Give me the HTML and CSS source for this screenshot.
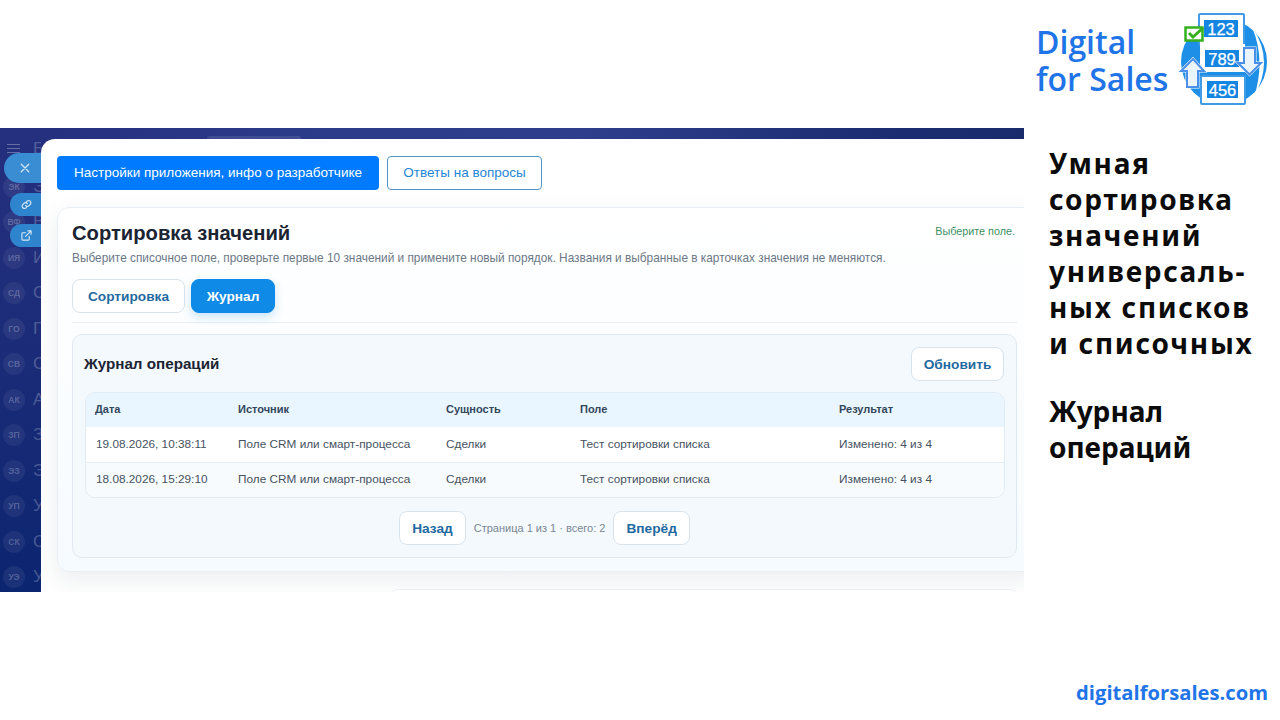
FILE: index.html
```html
<!DOCTYPE html>
<html lang="ru">
<head>
<meta charset="utf-8">
<title>Digital for Sales</title>
<link rel="stylesheet" href="styles.css">
</head>
<body>
<div class="slide">
  <div class="left">
    <div class="shot">
      <aside class="sidebar">
        <div class="side-head">
          <span class="burger"><i></i><i></i><i></i></span>
          <span class="side-label">Б</span>
        </div>
        <div class="side-item"><span class="ava">ЭК</span><span class="side-label">Э</span></div>
        <div class="side-item"><span class="ava">ВФ</span><span class="side-label">В</span></div>
        <div class="side-item"><span class="ava">ИЯ</span><span class="side-label">И</span></div>
        <div class="side-item"><span class="ava">СД</span><span class="side-label">С</span></div>
        <div class="side-item"><span class="ava">ГО</span><span class="side-label">Г</span></div>
        <div class="side-item"><span class="ava">СВ</span><span class="side-label">С</span></div>
        <div class="side-item"><span class="ava">АК</span><span class="side-label">А</span></div>
        <div class="side-item"><span class="ava">ЗП</span><span class="side-label">З</span></div>
        <div class="side-item"><span class="ava">ЭЗ</span><span class="side-label">Э</span></div>
        <div class="side-item"><span class="ava">УП</span><span class="side-label">У</span></div>
        <div class="side-item"><span class="ava">СК</span><span class="side-label">С</span></div>
        <div class="side-item"><span class="ava">УЭ</span><span class="side-label">У</span></div>
      </aside>
      <div class="main">
        <div class="topbar"><span class="top-pill"></span></div>
        <div class="panel">
          <div class="top-actions">
            <button class="btn-primary">Настройки приложения, инфо о разработчике</button>
            <button class="btn-outline">Ответы на вопросы</button>
          </div>
          <section class="card">
            <div class="card-head">
              <h1 class="card-title">Сортировка значений</h1>
              <span class="status">Выберите поле.</span>
            </div>
            <p class="card-sub">Выберите списочное поле, проверьте первые 10 значений и примените новый порядок. Названия и выбранные в карточках значения не меняются.</p>
            <div class="tabs">
              <button class="chip">Сортировка</button>
              <button class="chip chip-active">Журнал</button>
            </div>
            <div class="log">
              <div class="log-head">
                <h2 class="log-title">Журнал операций</h2>
                <button class="chip chip-refresh">Обновить</button>
              </div>
              <div class="table-wrap">
                <table class="log-table">
                  <thead>
                    <tr><th class="c1">Дата</th><th class="c2">Источник</th><th class="c3">Сущность</th><th class="c4">Поле</th><th>Результат</th></tr>
                  </thead>
                  <tbody>
                    <tr><td>19.08.2026, 10:38:11</td><td>Поле CRM или смарт-процесса</td><td>Сделки</td><td>Тест сортировки списка</td><td>Изменено: 4 из 4</td></tr>
                    <tr><td>18.08.2026, 15:29:10</td><td>Поле CRM или смарт-процесса</td><td>Сделки</td><td>Тест сортировки списка</td><td>Изменено: 4 из 4</td></tr>
                  </tbody>
                </table>
              </div>
              <div class="pager">
                <button class="chip chip-pager">Назад</button>
                <span class="pager-text">Страница 1 из 1 · всего: 2</span>
                <button class="chip chip-pager">Вперёд</button>
              </div>
            </div>
          </section>
          <div class="next-card"></div>
        </div>
      </div>
      <div class="float float-close">
        <svg width="10" height="10" viewBox="0 0 12 12"><path d="M1.500 1.500l9 9M10.500 1.500l-9 9" class="ic"/></svg>
      </div>
      <div class="float float-link">
        <svg width="11" height="11" viewBox="0 0 24 24"><path d="M10 14a5 5 0 0 0 7.500.5l3-3a5 5 0 0 0-7-7l-1.700 1.700M14 10a5 5 0 0 0-7.500-.5l-3 3a5 5 0 0 0 7 7l1.700-1.700" class="ic ic-thick"/></svg>
      </div>
      <div class="float float-open">
        <svg width="11" height="11" viewBox="0 0 24 24"><path d="M18 14v6a2 2 0 0 1-2 2H4a2 2 0 0 1-2-2V8a2 2 0 0 1 2-2h6M15 2h7v7M10 14L22 2" class="ic ic-thick"/></svg>
      </div>
    </div>
  </div>
  <div class="right">
    <header class="brand">
      <div class="brand-name">Digital<br>for Sales</div>
      <svg class="brand-logo" width="105" height="105" viewBox="0 0 105 105">
        <circle cx="54" cy="57" r="43" fill="#1e8fe6"/>
        <path d="M82 22Q105 55 84 92Q96 55 82 22z" fill="#fff"/>
        <path d="M21 87L33 99" fill="none" stroke="#fff" stroke-width="1.500"/>
        <rect x="29" y="9" width="45" height="31" rx="1" fill="#fff" stroke="#3f9be8" stroke-width="2"/>
        <rect x="34" y="15" width="34" height="17" fill="#1486e2"/>
        <text x="51" y="30" class="num">123</text>
        <rect x="30" y="39" width="45" height="28" fill="#fff"/>
        <rect x="35" y="45" width="34" height="17" fill="#1486e2"/>
        <text x="52" y="60" class="num">789</text>
        <rect x="31" y="71" width="44" height="28" rx="1" fill="#fff" stroke="#3f9be8" stroke-width="2"/>
        <rect x="37" y="76" width="31" height="17" fill="#1486e2"/>
        <text x="52.500" y="90.500" class="num">456</text>
        <rect x="15.500" y="22.500" width="17" height="13" fill="#fff" stroke="#35b01e" stroke-width="2.500"/>
        <path d="M19 28l4 4l10-9" fill="none" stroke="#35b01e" stroke-width="3"/>
        <path d="M74 43h11v15h6l-11.500 11.500l-11.500-11.500h6z" fill="#eaf4fd" stroke="#fff" stroke-width="3"/>
        <path d="M74 43h11v15h6l-11.500 11.500l-11.500-11.500h6z" fill="#eaf4fd" stroke="#4a90e8" stroke-width="2"/>
        <path d="M23 54l11 12h-6v16h-11v-16h-6z" fill="#eaf4fd" stroke="#fff" stroke-width="3"/>
        <path d="M23 54l11 12h-6v16h-11v-16h-6z" fill="#eaf4fd" stroke="#4a90e8" stroke-width="2"/>
      </svg>
    </header>
    <div class="pitch">
      <p class="pitch-block pitch-wide">Умная<br>сортировка<br>значений<br>универсаль-<br>ных списков<br>и списочных</p>
      <p class="pitch-block">Журнал<br>операций</p>
    </div>
    <footer class="site">digitalforsales.com</footer>
  </div>
</div>
</body>
</html>
```
FILE: styles.css
```css
* { box-sizing: border-box; }
html, body { margin: 0; padding: 0; background: #fff; }
body { font-family: "Liberation Sans", Arial, sans-serif; }
button { font-family: inherit; cursor: pointer; margin: 0; }
h1, h2, p { margin: 0; }

.slide { width: 1280px; height: 720px; display: grid; grid-template-columns: 1024px 256px; overflow: hidden; }

/* screenshot area */
.left { padding-top: 128px; }
.shot {
  position: relative;
  height: 464px;
  overflow: hidden;
  display: grid;
  grid-template-columns: 41px 983px;
  background: linear-gradient(180deg, #25307f 0%, #1c2c78 45%, #0c2570 100%);
}
.sidebar { overflow: hidden; }
.side-head { height: 41px; display: flex; align-items: center; gap: 13px; padding-left: 7px; }
.burger { display: flex; flex-direction: column; gap: 3px; width: 13px; flex: none; }
.burger i { display: block; height: 1px; background: rgba(255, 255, 255, .3); }
.side-label { font-size: 17px; color: rgba(255, 255, 255, .24); flex: none; }
.side-item { height: 35.5px; display: flex; align-items: center; gap: 3px; padding-left: 3px; white-space: nowrap; }
.ava {
  width: 22px; height: 22px; border-radius: 50%; flex: none;
  margin-right: 5px;
  display: flex; align-items: center; justify-content: center;
  font-size: 8.500px; font-weight: 700;
  color: rgba(255, 255, 255, .24);
  background: rgba(255, 255, 255, .06);
}

.main { display: flex; flex-direction: column; min-width: 0; }
.topbar {
  height: 11px; flex: none; display: flex; align-items: flex-end; padding-left: 166px;
  background: linear-gradient(90deg, #25307f 0%, #2c3a8a 25%, #2f3e8c 55%, #1d2d72 85%, #1a2b6c 100%);
}
.top-pill { width: 94px; height: 3px; border-radius: 8px 8px 0 0; background: rgba(255, 255, 255, .1); }
.panel {
  flex: 1;
  background: #fff;
  border-top-left-radius: 14px;
  padding: 17px 0 0 16px;
  overflow: hidden;
}

.top-actions { display: flex; gap: 8px; }
.btn-primary, .btn-outline { height: 34px; font-size: 13.500px; border-radius: 4px; padding: 0 0 1px; }
.btn-primary { width: 322px; background: #007bff; color: #fff; border: 0; }
.btn-outline { width: 155px; background: #fff; color: #1e86d6; border: 1px solid #4e94c6; }

.card {
  width: 980px;
  margin-top: 17px;
  height: 365px;
  padding: 13px 19px 0 14px;
  border: 1px solid #e9eff4;
  border-radius: 12px;
  background: linear-gradient(180deg, #fff 0%, #f6fbff 100%);
  box-shadow: 0 8px 24px rgba(30, 50, 80, .09);
}
.card-head { display: flex; justify-content: space-between; align-items: flex-start; padding-right: 2px; }
.card-title { font-size: 20.200px; line-height: 24px; font-weight: 700; color: #1b2433; }
.status { font-size: 10.800px; line-height: 14px; color: #3f8f63; margin-top: 3px; white-space: nowrap; }
.card-sub { margin-top: 5px; font-size: 11.850px; line-height: 16px; color: #6c7886; white-space: nowrap; }

.tabs { margin-top: 13px; display: flex; gap: 6px; padding-bottom: 9px; border-bottom: 1px solid #e6eef4; }
.chip {
  height: 34px; padding: 0; font-size: 13.700px; font-weight: 700;
  border-radius: 8px; border: 1px solid #d8e3ec; background: #fff; color: #1f6aa0;
}
.tabs .chip { width: 113px; }
.tabs .chip-active { width: 84px; background: #0f8ae6; border-color: #0f8ae6; color: #fff; box-shadow: 0 4px 10px rgba(15, 138, 230, .22); }

.log {
  margin-top: 11px; height: 224px;
  padding: 12px 12px 0 12px;
  border: 1px solid #e0e9f1; border-radius: 10px; background: #f4f9fd;
}
.log-head { display: flex; justify-content: space-between; align-items: center; }
.log-title { font-size: 15.200px; font-weight: 700; color: #1b2433; margin: 0 0 2px -1px; }
.chip-refresh { width: 93px; }

.table-wrap {
  margin-top: 11px;
  border: 1px solid #e0ebf3; border-radius: 10px; overflow: hidden; background: #fff;
  margin-right: -1px;
}
.log-table { width: 100%; border-collapse: collapse; table-layout: fixed; }
.log-table th, .log-table td { padding: 0 0 1px 9px; text-align: left; white-space: nowrap; }
.log-table th { height: 34px; padding-bottom: 2px; font-size: 11px; font-weight: 700; color: #33475b; background: #e9f5ff; }
.log-table td { height: 35px; font-size: 11.800px; color: #46525f; }
.log-table td:first-child { padding-left: 10px; }
.log-table tbody tr + tr td { border-top: 1px solid #e6eef4; background: #f8fbfd; }
.c1 { width: 143px; }
.c2 { width: 208px; }
.c3 { width: 134px; }
.c4 { width: 259px; }

.pager { margin-top: 13px; display: flex; justify-content: center; align-items: center; gap: 8px; }
.chip-pager { padding: 0 12px; }
.pager-text { font-size: 11px; color: #7a8794; }

.next-card { width: 628px; height: 40px; margin: 17px 0 0 333px; background: #fff; border: 1px solid #eceff1; border-radius: 8px; }

/* floating buttons over the screenshot */
.float { position: absolute; display: flex; align-items: center; background: #3a8dd2; border-radius: 16px 0 0 16px; }
.float-close { left: 4px; top: 25px; width: 37px; height: 30px; padding-left: 16px; }
.float-link { left: 10px; top: 65px; width: 31px; height: 23px; padding-left: 11px; background: #2f85cd; }
.float-open { left: 10px; top: 96px; width: 31px; height: 23px; padding-left: 11px; background: #2f85cd; }
.ic { fill: none; stroke: #d3e6f6; stroke-width: 1.500; stroke-linecap: round; stroke-linejoin: round; }
.ic-thick { stroke-width: 2.500; }

/* right column */
.right { display: flex; flex-direction: column; background: #fff; }
.brand { display: flex; height: 128px; padding: 5px 0 0 12px; }
.brand-name {
  font-family: "Open Sans", sans-serif;
  font-size: 32px; line-height: 37px; font-weight: 600; color: #1f74e8;
  padding-top: 18px; width: 134px; white-space: nowrap;
}
.brand-logo { flex: none; display: block; }
.pitch { padding: 17px 0 0 25px; flex: 1; }
.pitch-block {
  font-family: "Noto Sans", sans-serif;
  font-size: 28px; line-height: 36px; font-weight: 700; color: #0b0b0b; white-space: nowrap;
}
.pitch-wide { letter-spacing: 1.700px; }
.pitch-block + .pitch-block { margin-top: 32px; }
.site {
  font-family: "Open Sans", sans-serif;
  font-size: 20.200px; line-height: 28px; font-weight: 700; color: #1f74e8;
  text-align: right; padding: 0 12px 14px 0;
}
.num { font-family: "Liberation Sans", sans-serif; font-size: 16.500px; fill: #fff; text-anchor: middle; stroke: #fff; stroke-width: .25; }
```
